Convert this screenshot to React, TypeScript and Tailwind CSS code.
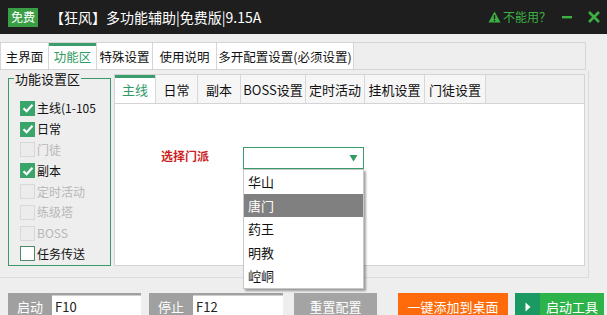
import React from "react";

const font = { fontFamily: '"Noto Sans CJK SC", "Noto Sans", sans-serif' };

function Check({ state, label }: { state: "on" | "off" | "dis"; label: string }) {
  return (
    <div className="flex items-center h-[20.8px] gap-[2px] whitespace-nowrap">
      {state === "on" ? (
        <div className="w-[15px] h-[15px] shrink-0 bg-[#3aa56a] flex items-center justify-center">
          <svg width="12" height="12" viewBox="0 0 12 12">
            <path d="M1.5 6.2 L4.6 9.2 L10.5 2.8" stroke="white" strokeWidth="2.2" fill="none" />
          </svg>
        </div>
      ) : state === "dis" ? (
        <div className="w-[15px] h-[15px] shrink-0 border border-[#d8d8d8] bg-[#ececec]" />
      ) : (
        <div className="w-[15px] h-[15px] shrink-0 border border-[#4a8a6a] bg-white" />
      )}
      <span className={`text-[12px] leading-none ${state === "dis" ? "text-[#b8b8b8]" : "text-[#111]"}`}>{label}</span>
    </div>
  );
}

export default function App() {
  const mainTabs = ["主界面", "功能区", "特殊设置", "使用说明", "多开配置设置(必须设置)"];
  const mainW = [48, 48, 56, 64, 137];
  const innerTabs = ["主线", "日常", "副本", "BOSS设置", "定时活动", "挂机设置", "门徒设置"];
  const innerW = [41, 42, 43, 65, 59, 60, 61];
  const items = ["华山", "唐门", "药王", "明教", "崆峒"];
  return (
    <div className="w-[607px] h-[315px] overflow-hidden bg-[#eeeeee] flex flex-col" style={font}>
      {/* title bar */}
      <div className="h-[34px] bg-[#1e1e1e] flex items-center pl-[8px] pr-[6px] shrink-0">
        <div className="w-[30px] h-[19px] bg-[#3a9e45] text-white text-[12px] flex items-center justify-center leading-none">免费</div>
        <div className="ml-[12px] text-white text-[14px] leading-none">【狂风】多功能辅助|免费版|9.15A</div>
        <div className="ml-auto flex items-center text-[#3cb043] text-[12px] leading-none">
          <svg width="13" height="12" viewBox="0 0 13 12" className="mr-[2px]">
            <path d="M6.5 0.5 L12.5 11.5 L0.5 11.5 Z" fill="#3cb043" />
            <rect x="5.8" y="4" width="1.4" height="4.2" fill="#1e1e1e" />
            <rect x="5.8" y="9" width="1.4" height="1.4" fill="#1e1e1e" />
          </svg>
          <span>不能用？</span>
          <svg width="12" height="12" viewBox="0 0 12 12" className="ml-[10px]">
            <rect x="1" y="5" width="10" height="2.4" fill="#3cb043" />
          </svg>
          <svg width="14" height="14" viewBox="0 0 14 14" className="ml-[14px]">
            <path d="M2 2 L12 12 M12 2 L2 12" stroke="#3cb043" strokeWidth="2.6" />
          </svg>
        </div>
      </div>

      {/* main tabs */}
      <div className="mt-[8px] h-[28px] w-[586px] border border-[#d6d6d6] bg-[#eeeeee] flex shrink-0">
        {mainTabs.map((t, i) => (
          <div
            key={t}
            style={{ width: mainW[i] }}
            className={`h-full flex items-center justify-center whitespace-nowrap text-[12.5px] pt-[2px] border-r border-[#d6d6d6] relative ${
              i === 1 ? "bg-white text-[#2e9a62]" : "bg-white text-[#111]"
            }`}
          >
            {i === 1 && <div className="absolute top-0 left-0 right-0 h-[3px] bg-[#3a9e6c]" />}
            {t}
          </div>
        ))}
      </div>

      {/* outer panel */}
      <div className="w-[589px] h-[208px] border-r border-b border-[#dcdcdc] flex shrink-0">
        <fieldset className="ml-[8px] mt-[2px] w-[103px] h-[194px] border border-[#3a9a6c] pl-[11px] pr-0 pt-[13px]">
          <legend className="px-[1px] -ml-[6px] text-[13px] text-[#111] leading-none">功能设置区</legend>
          <Check state="on" label="主线(1-105" />
          <Check state="on" label="日常" />
          <Check state="dis" label="门徒" />
          <Check state="on" label="副本" />
          <Check state="dis" label="定时活动" />
          <Check state="dis" label="练级塔" />
          <Check state="dis" label="BOSS" />
          <Check state="off" label="任务传送" />
        </fieldset>

        <div className="ml-[3px] mt-[4px] w-[471px] h-[192px] border border-[#d4d4d4] flex flex-col">
          <div className="h-[29px] border-b border-[#d4d4d4] flex shrink-0 bg-[#efefef]">
            {innerTabs.map((t, i) => (
              <div
                key={t}
                style={{ width: innerW[i] }}
                className={`h-full flex items-center justify-center whitespace-nowrap text-[13px] pt-[2px] border-r border-[#d8d8d8] relative ${
                  i === 0 ? "bg-white text-[#2e9a62]" : "bg-[#f6f6f6] text-[#111]"
                }`}
              >
                {i === 0 && <div className="absolute top-0 left-0 right-0 h-[3px] bg-[#3a9e6c]" />}
                {t}
              </div>
            ))}
          </div>
          <div className="flex-1 bg-white flex pt-[43px] pl-[46px]">
            <div className="text-[#cc1f1f] text-[12px] font-bold mt-[3px] leading-none">选择门派</div>
            <div className="ml-[34px] relative">
              <div className="w-[121px] h-[22px] border border-[#3a9a6c] bg-white flex items-center justify-end pr-[5px]">
                <svg width="9" height="8" viewBox="0 0 9 8">
                  <path d="M0.5 1 L8.5 1 L4.5 7.5 Z" fill="#2f9a62" />
                </svg>
              </div>
              <div className="absolute left-0 top-[22px] w-[121px] bg-white border border-[#c8c8c8] shadow-[2px_2px_2px_rgba(0,0,0,0.35)] z-10">
                {items.map((it, i) => (
                  <div
                    key={it}
                    className={`h-[23.5px] flex items-center pl-[4px] text-[13px] ${
                      i === 1 ? "bg-[#808080] text-white" : "text-[#111]"
                    }`}
                  >
                    {it}
                  </div>
                ))}
              </div>
            </div>
          </div>
        </div>
      </div>

      {/* bottom buttons */}
      <div className="mt-[15px] flex items-start pl-[8px] h-[30px]">
        <div className="flex w-[133px] h-[24px] bg-[#a0a0a0]">
          <div className="w-[44px] flex items-center justify-center text-white text-[13px] pt-[3px]">启动</div>
          <div className="flex-1 mt-[2px] bg-white border-t border-[#cfcfcf] flex items-start pl-[3px] pt-[4px] text-[13px] text-[#222] leading-none">F10</div>
        </div>
        <div className="ml-[8px] flex w-[134px] h-[24px] bg-[#a0a0a0]">
          <div className="w-[44px] flex items-center justify-center text-white text-[13px] pt-[3px]">停止</div>
          <div className="flex-1 mt-[2px] bg-white border-t border-[#cfcfcf] flex items-start pl-[3px] pt-[4px] text-[13px] text-[#222] leading-none">F12</div>
        </div>
        <div className="ml-[11px] w-[83px] h-[24px] bg-[#a4a4a4] text-white text-[13px] flex items-center justify-center pt-[3px]">重置配置</div>
        <div className="ml-[21px] w-[110px] h-[24px] bg-[#ff6b0a] text-white text-[13px] flex items-center justify-center pt-[3px]">一键添加到桌面</div>
        <div className="ml-[7px] w-[89px] h-[24px] bg-[#2db34a] flex">
          <div className="w-[25px] bg-[#1a9a62] flex items-center justify-center pt-[3px]">
            <svg width="6" height="10" viewBox="0 0 6 10">
              <path d="M0.5 0.5 L5.5 5 L0.5 9.5 Z" fill="white" />
            </svg>
          </div>
          <div className="flex-1 flex items-center justify-center text-white text-[13px] pt-[3px]">启动工具</div>
        </div>
      </div>
    </div>
  );
}
